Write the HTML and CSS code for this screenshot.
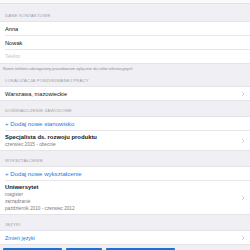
FILE: index.html
```html
<!DOCTYPE html>
<html lang="pl">
<head>
<meta charset="UTF-8">
<meta name="viewport" content="width=device-width, initial-scale=1.0">
<title>Profil kandydata</title>
<link rel="stylesheet" href="styles.css">
</head>
<body>

<div class="top-bar"></div>

<div class="group-title first">Dane kontaktowe</div>
<div class="list">
    <div class="row">Anna</div>
    <div class="row">Nowak</div>
    <div class="row placeholder">Telefon</div>
</div>
<div class="note">Numer telefonu udostępniony pracodawcom wyłącznie do celów rekrutacyjnych</div>

<div class="group-title after-note">Lokalizacja poszukiwanej pracy</div>
<div class="list">
    <div class="row">Warszawa, mazowieckie
        <svg class="chevron" viewBox="0 0 4 6"><polyline points="1,1 3,3 1,5"/></svg>
    </div>
</div>

<div class="group-title">Doświadczenie zawodowe</div>
<div class="list">
    <div class="row link">+ Dodaj nowe stanowisko</div>
    <div class="row entry">
        <div>
            <div class="entry-title">Specjalista ds. rozwoju produktu</div>
            <div class="entry-sub">czerwiec 2015 - obecnie</div>
        </div>
        <svg class="chevron" viewBox="0 0 4 6"><polyline points="1,1 3,3 1,5"/></svg>
    </div>
</div>

<div class="group-title">Wykształcenie</div>
<div class="list">
    <div class="row link">+ Dodaj nowe wykształcenie</div>
    <div class="row entry tall">
        <div>
            <div class="entry-title">Uniwersytet</div>
            <div class="entry-sub">magister</div>
            <div class="entry-sub">zarządzanie</div>
            <div class="entry-sub">październik 2010 - czerwiec 2012</div>
        </div>
        <svg class="chevron" viewBox="0 0 4 6"><polyline points="1,1 3,3 1,5"/></svg>
    </div>
</div>

<div class="group-title">Języki</div>
<div class="list">
    <div class="row link plain">Zmień języki
        <svg class="chevron" viewBox="0 0 4 6"><polyline points="1,1 3,3 1,5"/></svg>
    </div>
</div>

<div class="tags">
    <span class="tag wide">polski - zaawansowany</span>
    <span class="tag">polski - ojczysty</span>
    <span class="tag">francuski - średnio zaawansowany</span>
</div>

</body>
</html>
```

FILE: styles.css
```css
body {
    margin: 0;
    width: 250px;
    height: 250px;
    overflow: hidden;
    background-color: #efeff4;
    font-family: "Liberation Sans", Arial, sans-serif;
    color: #1c1c1c;
}

.top-bar {
    height: 4px;
    background-color: #fafafa;
    border-bottom: 1px solid #e2e2e6;
    box-sizing: border-box;
}

.group-title {
    height: 15px;
    box-sizing: border-box;
    display: flex;
    align-items: flex-end;
    padding: 0 5px 3px;
    font-size: 4.3px;
    color: #a0a0a6;
    text-transform: uppercase;
    letter-spacing: 0.15px;
}

.group-title.first {
    height: 17px;
}

.group-title.after-note {
    height: 13px;
}

.list {
    background-color: #fff;
    border-top: 1px solid #e3e3e8;
    border-bottom: 1px solid #e3e3e8;
}

.row {
    height: 13px;
    display: flex;
    align-items: center;
    justify-content: space-between;
    padding: 0 5px;
    font-size: 5.7px;
    color: #161616;
}

.row + .row {
    margin-left: 5px;
    padding-left: 0;
    border-top: 1px solid #e8e8ec;
}

.placeholder {
    color: #c4c4c9;
    font-size: 4.8px;
}

.link {
    color: #1a7ae0;
    font-size: 6.1px;
}

.link.plain {
    font-size: 5.4px;
}

.entry {
    height: 19px;
}

.entry.tall {
    height: 33px;
}

.entry-title {
    font-weight: bold;
    font-size: 5.9px;
    line-height: 7px;
}

.entry-sub {
    font-size: 4.7px;
    line-height: 7px;
    color: #7a7a80;
}

.chevron {
    width: 4px;
    height: 6px;
    fill: none;
    stroke: #c7c7cc;
    stroke-width: 0.9;
}

.note {
    height: 9px;
    display: flex;
    align-items: center;
    padding: 0 3px;
    font-size: 3.7px;
    color: #8e8e93;
}

.tags {
    display: flex;
    gap: 4px;
    padding: 3px 3px 0;
}

.tag {
    background-color: #1a73d4;
    color: #fff;
    font-size: 4px;
    padding: 1px 4px;
    border-radius: 1px;
    white-space: nowrap;
}

.tag.wide {
    padding: 1px 9px;
}
```
